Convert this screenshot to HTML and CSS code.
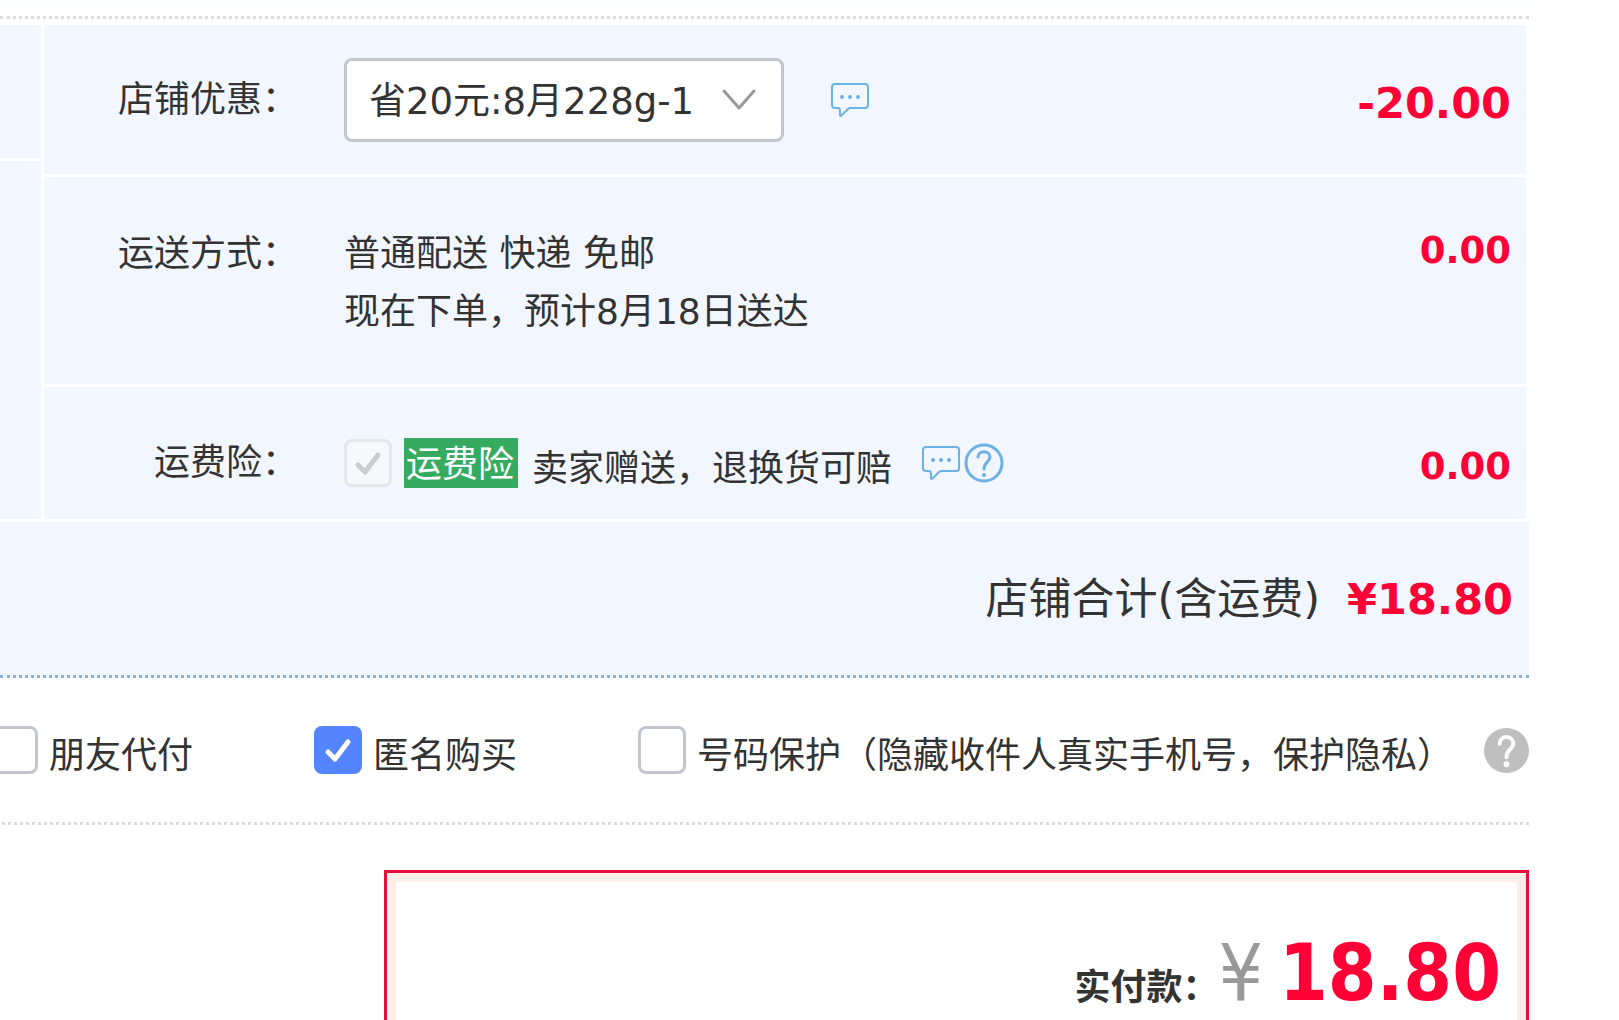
FILE: index.html
```html
<!DOCTYPE html>
<html lang="zh-CN">

  <head>
    <title>确认订单</title>
    <meta charset="utf-8">
    <!-- CSS -->
    <link rel="stylesheet" href="styles.css">
  </head>

  <body>
    <main class="page">
      <div class="goods-end"></div>

      <div class="shop">
        <div class="side">
          <div class="side-top"></div>
          <div class="side-bottom"></div>
        </div>
        <div class="rows">
          <div class="row promo">
            <label class="label" for="coupon">店铺优惠：</label>
            <div class="content">
              <div class="select">
                <select id="coupon">
                  <option>省20元:8月228g-1</option>
                </select>
                <svg class="arrow" width="36" height="24" viewBox="0 0 36 24"><path d="M3 3 L18 20 L33 3"/></svg>
              </div>
              <svg class="bubble" width="38" height="36" viewBox="0 0 38 36"><path d="M4 2 H34 Q37 2 37 5 V23 Q37 26 34 26 H20 Q18 26 17 27 L11 33 Q9 35 9 33 V29 Q9 26 7 26 H4 Q1 26 1 23 V5 Q1 2 4 2 Z"/><circle cx="11" cy="15" r="2"/><circle cx="19" cy="15" r="2"/><circle cx="27" cy="15" r="2"/></svg>
            </div>
            <div class="price big">-20.00</div>
          </div>
          <div class="row delivery">
            <div class="label">运送方式：</div>
            <div class="content">
              <div>
                <p>普通配送 快递 免邮</p>
                <p>现在下单，预计8月18日送达</p>
              </div>
            </div>
            <div class="price">0.00</div>
          </div>
          <div class="row insurance">
            <div class="label">运费险：</div>
            <div class="content">
              <span class="check">
                <input type="checkbox" id="insurance" checked disabled>
                <svg width="48" height="48" viewBox="0 0 48 48"><path d="M14 26 L21 33 L34 16"/></svg>
              </span>
              <label class="tag" for="insurance">运费险</label>
              <span class="gift">卖家赠送，退换货可赔</span>
              <svg class="bubble" width="38" height="36" viewBox="0 0 38 36"><path d="M4 2 H34 Q37 2 37 5 V23 Q37 26 34 26 H20 Q18 26 17 27 L11 33 Q9 35 9 33 V29 Q9 26 7 26 H4 Q1 26 1 23 V5 Q1 2 4 2 Z"/><circle cx="11" cy="15" r="2"/><circle cx="19" cy="15" r="2"/><circle cx="27" cy="15" r="2"/></svg>
              <svg class="help" width="40" height="40" viewBox="0 0 40 40"><circle cx="20" cy="20" r="18"/><path d="M14 14 C14 7 26 7 26 14 C26 19 20 19 20 26"/><circle class="dot" cx="20" cy="32" r="2"/></svg>
            </div>
            <div class="price">0.00</div>
          </div>
        </div>
      </div>

      <div class="total">
        <span>店铺合计(含运费)</span>
        <span class="price big">¥18.80</span>
      </div>

      <div class="options">
        <div class="option">
          <span class="check"><input type="checkbox" id="friend"></span>
          <label for="friend">朋友代付</label>
        </div>
        <div class="option">
          <span class="check">
            <input type="checkbox" id="anonymous" checked>
            <svg width="48" height="48" viewBox="0 0 48 48"><path d="M14 26 L21 33 L34 16"/></svg>
          </span>
          <label for="anonymous">匿名购买</label>
        </div>
        <div class="option">
          <span class="check"><input type="checkbox" id="protect"></span>
          <label for="protect">号码保护（隐藏收件人真实手机号，保护隐私）</label>
        </div>
        <svg class="tip" width="45" height="45" viewBox="0 0 46 46"><circle cx="23" cy="23" r="23"/><path d="M16 16 C16 7 30 7 30 16 C30 22 23 21 23 30"/><circle class="dot" cx="23" cy="37" r="3"/></svg>
      </div>

      <div class="pay">
        <span class="pay-label">实付款：</span>
        <span class="yen">¥</span>
        <strong class="sum">18.80</strong>
      </div>
    </main>
  </body>
</html>
```
FILE: styles.css
```css
body{
  margin: 0;
  background-color: #fff;
  color: #333;
  font-family: "DejaVu Sans", "Noto Sans CJK SC", sans-serif;
  font-size: 36px;
  line-height: 58px;
}
p{
  margin: 0;
}
svg{
  flex: none;
  fill: none;
  stroke-linecap: round;
  stroke-linejoin: round;
}
.page{
  display: flex;
  flex-direction: column;
  height: 100vh;
  margin-right: 90px;
  overflow: hidden;
}
.goods-end{
  flex: none;
  height: 16px;
  background: linear-gradient(#fbfdff 10px, #fff 10px);
  border-bottom: 3px dotted #ddd;
  margin-bottom: 6px;
}

/* shop rows */
.shop{
  display: flex;
  gap: 3px;
  margin-right: 3px;
}
.side{
  display: flex;
  flex-direction: column;
  gap: 3px;
  width: 41px;
}
.side-top{
  height: 133px;
}
.side-bottom{
  flex: 1;
}
.side-top, .side-bottom, .row, .total{
  background-color: #f1f6ff;
}
.rows{
  display: flex;
  flex-direction: column;
  flex: 1;
  gap: 3px;
}
.row{
  display: flex;
  box-sizing: border-box;
  padding-right: 15px;
}
.promo{
  align-items: center;
  height: 149px;
}
.promo .price{
  padding-top: 6px;
}
.delivery{
  height: 207px;
  padding-top: 48px;
}
.delivery .price{
  line-height: 52px;
}
.insurance{
  height: 132px;
  padding-top: 48px;
}
.insurance .price{
  line-height: 64px;
}
.label{
  width: 254px;
  text-align: right;
  white-space: nowrap;
}
.content{
  display: flex;
  flex: 1;
  align-items: center;
  align-self: flex-start;
  margin-left: 46px;
}
.promo .content{
  align-self: center;
}
.insurance .label{
  line-height: 56px;
}
.insurance .content{
  height: 56px;
}
.price{
  color: #ff0036;
  font-size: 37px;
  font-weight: bold;
}
.big{
  font-size: 43px;
}

/* controls */
.select{
  position: relative;
  margin-right: 47px;
}
select{
  appearance: none;
  display: block;
  box-sizing: border-box;
  width: 440px;
  height: 84px;
  padding: 4px 80px 0 22px;
  border: 3px solid #c4c6cf;
  border-radius: 8px;
  background-color: #fff;
  color: #333;
  font: inherit;
  font-size: 37px;
}
.arrow{
  position: absolute;
  top: 30px;
  right: 27px;
  stroke: #999;
  stroke-width: 3;
  pointer-events: none;
}
.bubble, .help{
  stroke: #6cb2e2;
  stroke-width: 2;
}
.bubble circle, .help .dot{
  fill: #6cb2e2;
  stroke: none;
}
.help{
  margin-left: 4px;
  stroke-width: 3;
}
.check{
  display: grid;
  flex: none;
}
.check input, .check svg{
  grid-area: 1 / 1;
}
.check svg{
  stroke: #fff;
  stroke-width: 5;
  pointer-events: none;
}
.check input{
  appearance: none;
  box-sizing: border-box;
  width: 48px;
  height: 48px;
  margin: 0;
  border: 3px solid #c4c6cf;
  border-radius: 8px;
  background-color: #fff;
}
.check input:checked{
  border-color: #5584ff;
  background-color: #5584ff;
}
.check input:disabled{
  border-color: #e6e7eb;
  background-color: #f7f8fa;
}
.check input:disabled + svg{
  stroke: #ccc;
}
.tag{
  box-sizing: border-box;
  height: 50px;
  margin-left: 12px;
  padding: 0 4px 0 2px;
  background-color: #36ab60;
  color: #fff;
  line-height: 54px;
}
.gift{
  margin: 0 30px 0 14px;
  padding-top: 12px;
}

.total{
  display: flex;
  flex: none;
  align-items: center;
  justify-content: flex-end;
  gap: 27px;
  height: 153px;
  margin-top: 3px;
  padding-right: 16px;
  border-bottom: 3px dotted #8bb0e6;
  font-size: 43px;
  line-height: 60px;
}

.options{
  display: flex;
  flex: none;
  align-items: center;
  gap: 121px;
  height: 144px;
  margin-left: -10px;
  border-bottom: 3px dotted #ddd;
}
.option{
  display: flex;
  align-items: center;
  gap: 11px;
  white-space: nowrap;
}
.option label{
  padding-top: 12px;
}
.option:nth-child(3){
  margin-right: -121px;
}
.tip{
  margin-left: auto;
}
.tip circle{
  fill: #bfbfbf;
}
.tip path{
  stroke: #fff;
  stroke-width: 4;
}
.tip .dot{
  fill: #fff;
}

/* payment box, runs on past the window */
.pay{
  display: flex;
  flex: 1;
  align-items: baseline;
  justify-content: flex-end;
  margin: 45px 0 0 384px;
  padding: 55px 25px 0 0;
  border: 3px solid #e60f3c;
  border-bottom: 0;
  box-shadow: inset 0 9px #ffeee8, inset 9px 0 #ffeee8, inset -9px 0 #ffeee8;
}
.pay-label{
  font-weight: bold;
}
.yen, .sum{
  font-family: "DejaVu Sans Condensed", "DejaVu Sans", sans-serif;
  font-size: 78px;
  line-height: 90px;
}
.yen{
  margin-right: 16px;
  color: #999;
}
.sum{
  color: #ff0036;
}
```
